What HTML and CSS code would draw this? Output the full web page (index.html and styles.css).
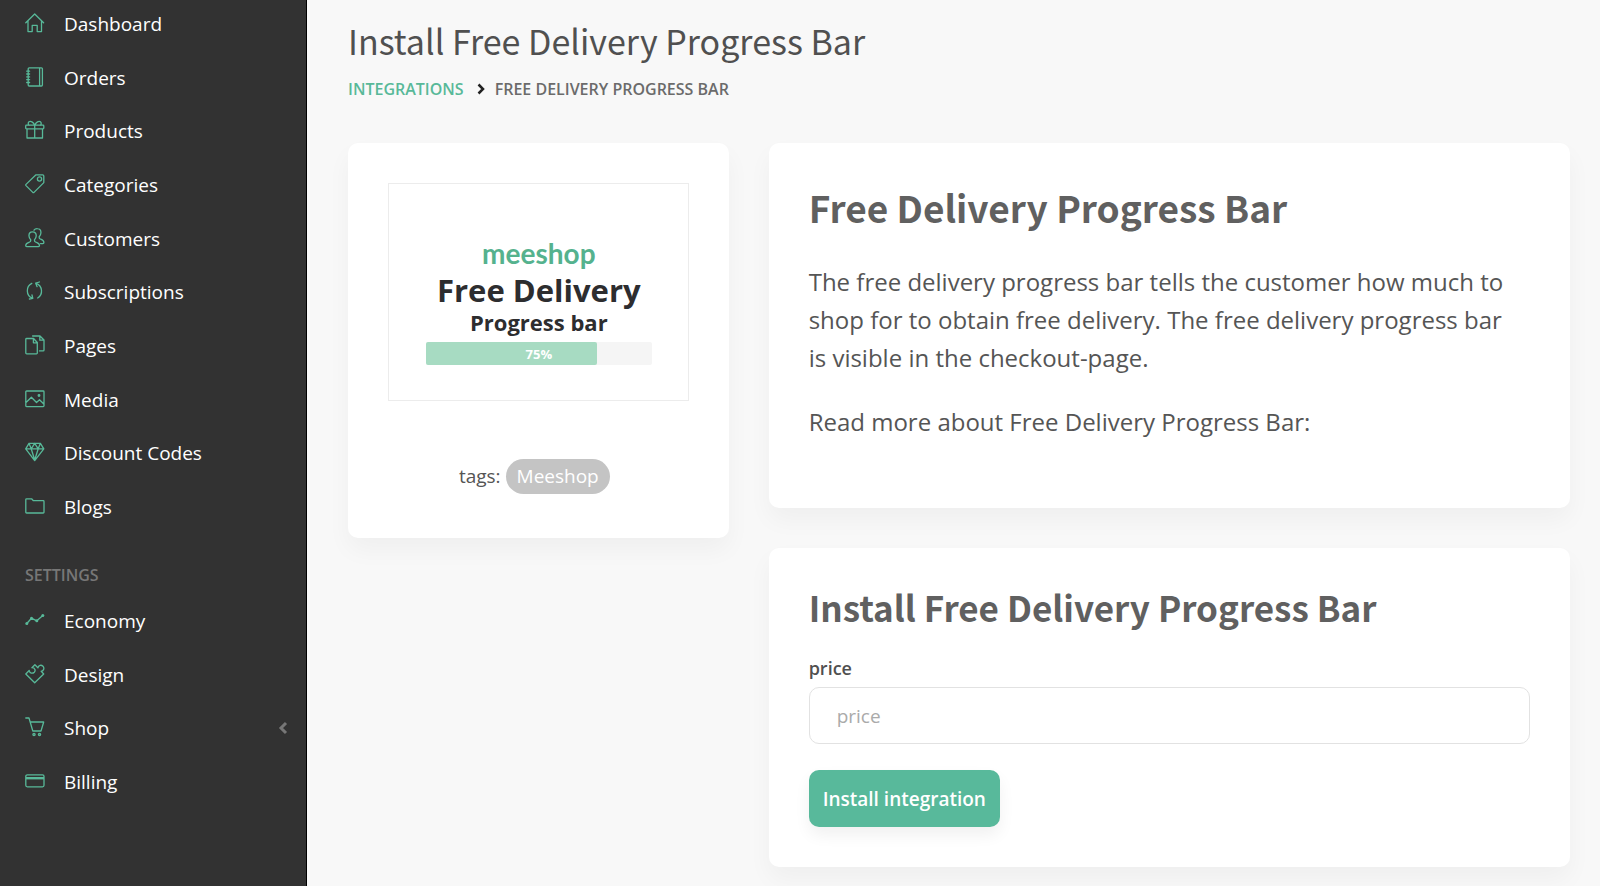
FILE: index.html
```html
<!DOCTYPE html>
<html lang="en">
<head>
<meta charset="utf-8">
<meta name="viewport" content="width=device-width, initial-scale=1">
<title>Install Free Delivery Progress Bar</title>
<link rel="stylesheet" href="styles.css">
</head>
<body>
<div class="layout">
  <nav class="sidebar" aria-label="Main menu">
    <ul class="menu menu-main">
      <li><a class="menu-link" href="#"><svg class="icon" viewBox="0 0 20 20"><path d="M.8 9.8 9.7 1l8.9 8.8M3 8.2V18.6H7.2V12.4h5V18.6h4.3V8.2"/></svg>Dashboard</a></li>
      <li><a class="menu-link" href="#"><svg class="icon" viewBox="0 0 20 20"><path d="M4.2.8H16.4q1 0 1 1V18q0 1-1 1H4.2q-1 0-1-1V1.800q0-1 1-1ZM14.6.8V19M1.700 4.200H4.600M1.700 7H4.600M1.700 9.900H4.600M1.700 12.700H4.600M1.700 15.500H4.600"/></svg>Orders</a></li>
      <li><a class="menu-link" href="#"><svg class="icon" viewBox="0 0 20 20"><path d="M1.500 5.200H18q.8 0 .8.800V8q0 .8-.8.800H1.500Q.7 8.800.7 8V6q0-.8.8-.8ZM2 8.800V18H17.500V8.800M9.700 5.200V18M9.700 5.200C8.500 2 5.500.6 4 1.800 2.800 2.800 3.200 4.500 4 5.200M9.700 5.200C11 2 14 .6 15.400 1.800c1.200 1 .9 2.700 0 3.400"/></svg>Products</a></li>
      <li><a class="menu-link" href="#"><svg class="icon" viewBox="0 0 20 20"><path d="M11 .8H17.600q1.200 0 1.200 1.200V8.600L9 18.400q-.6.500-1.200 0L1 11.600q-.5-.6 0-1.200Z"/><circle cx="14.500" cy="5" r="2.100"/></svg>Categories</a></li>
      <li><a class="menu-link" href="#"><svg class="icon" viewBox="0 0 20 20"><path d="M7.400 3.800c-2.500 0-3.600 1.800-3.400 4.200.1 1.700.9 2.900 1.700 3.700.2 1.400 0 1.900-1 2.300-2 .8-4 1.100-4 3.600 0 .7.400 1 1 1H13.500c.7 0 1-.3 1-1 0-2.500-2.200-2.800-4-3.600-1-.4-1.200-.9-1-2.300.9-.8 1.600-2 1.700-3.700.2-2.400-1.100-4.200-3.800-4.200ZM9 2.200C9.800 1 11 .6 12.500.7c2.500.1 3.600 1.900 3.400 4.300-.1 1.700-.9 2.900-1.700 3.700-.2 1.400 0 1.900 1 2.300 2 .8 3.700 1.200 3.700 3.600 0 .7-.3 1-1 1H15.500"/></svg>Customers</a></li>
      <li><a class="menu-link" href="#"><svg class="icon" viewBox="0 0 20 20"><path d="M6.800 2.400A8.200 8.200 0 0 0 7.200 17.200M4.400 18l3.400-.6L7 14M12.700 17A8.200 8.200 0 0 0 11.200 2.400M14.400 1l-3.700 1.200 1.400 3.500"/></svg>Subscriptions</a></li>
      <li><a class="menu-link" href="#"><svg class="icon" viewBox="0 0 20 20"><path d="M1.700 3.500H8.600L12.300 7.500V18q0 .8-.8.800H1.700Q.8 18.800.8 18V4.300q0-.8.900-.8ZM8.400 3.500V7.800H12.300M7.600 1H15L19 5V15q0 .9-.8.900H14.500M14.800 1V5.200H19"/></svg>Pages</a></li>
      <li><a class="menu-link" href="#"><svg class="icon" viewBox="0 0 20 20"><path d="M1.600 2H18.200q.8 0 .8.800V16.800q0 .8-.8.800H1.600q-.8 0-.8-.8V2.800Q.8 2 1.600 2ZM1 13.500 6.400 8.200 11.500 13.500 14.500 10.800 18.800 15"/><circle cx="14" cy="6.500" r=".8"/></svg>Media</a></li>
      <li><a class="menu-link" href="#"><svg class="icon" viewBox="0 0 20 20"><path d="M4 1.300H15.400L18.800 6.800 9.700 18.600.7 6.800ZM.7 6.800H18.800M4 1.300 6.200 6.800 9.700 1.300 13.200 6.800 15.400 1.300M6.200 6.800 9.700 18 13.200 6.800"/></svg>Discount Codes</a></li>
      <li><a class="menu-link" href="#"><svg class="icon" viewBox="0 0 20 20"><path d="M1.600 2.800H6.600L8.400 4.700H18.200q.8 0 .8.800V16.200q0 .8-.8.800H1.600q-.8 0-.8-.8V3.600q0-.8.800-.8Z"/></svg>Blogs</a></li>
    </ul>
    <h2 class="menu-heading">SETTINGS</h2>
    <ul class="menu menu-settings">
      <li><a class="menu-link" href="#"><svg class="icon" viewBox="0 0 20 20"><path d="M1.800 13.500 6.500 8.200 11.800 10.800 17.800 5.400"/><g class="dots"><circle cx="1.800" cy="13.500" r="1.500"/><circle cx="6.500" cy="8.200" r="1.500"/><circle cx="11.800" cy="10.800" r="1.500"/><circle cx="17.800" cy="5.400" r="1.500"/></g></svg>Economy</a></li>
      <li><a class="menu-link" href="#"><svg class="icon" viewBox="0 0 20 20"><path d="M.8 10 9.700 18.700 18.700 10 16.200 7.300C19 6.800 19.500 3.900 18 2.300 16.300.6 13.500 1 12.900 3.800L9.900.8 6.900 3.700C10.400 3.800 10.700 6.700 9.300 8.200 7.700 9.800 4.600 9.500 4.200 6.500Z"/></svg>Design</a></li>
      <li><a class="menu-link" href="#"><svg class="icon" viewBox="0 0 20 20"><path d="M.8 1H4L7.800 14H16L18.700 5H5.300"/><circle cx="9" cy="17.600" r="1.100"/><circle cx="14.500" cy="17.600" r="1.100"/></svg>Shop<svg class="menu-caret" viewBox="0 0 10 14"><path d="M8 2 3 7l5 5"/></svg></a></li>
      <li><a class="menu-link" href="#"><svg class="icon" viewBox="0 0 20 20"><rect x=".8" y="3.800" width="18.200" height="12" rx="1.500"/><path class="stripe" d="M1 7.200H19"/></svg>Billing</a></li>
    </ul>
  </nav>

  <main class="content">
    <h1 class="page-title">Install Free Delivery Progress Bar</h1>
    <nav class="breadcrumb" aria-label="Breadcrumb">
      <a href="#">INTEGRATIONS</a>
      <svg class="separator" viewBox="0 0 8 12"><path d="m1.500 1.500 4.500 4.500-4.500 4.500"/></svg>
      <span>FREE DELIVERY PROGRESS BAR</span>
    </nav>

    <div class="columns">
      <section class="card summary">
        <div class="preview">
          <div class="brand">meeshop</div>
          <div class="preview-title">Free Delivery</div>
          <div class="preview-subtitle">Progress bar</div>
          <div class="bar"><div class="bar-fill"></div><span class="bar-value">75%</span></div>
        </div>
        <p class="tags">tags: <span class="tag">Meeshop</span></p>
      </section>

      <div class="details">
        <section class="card about">
          <h2 class="card-title card-title-large">Free Delivery Progress Bar</h2>
          <p>The free delivery progress bar tells the customer how much to shop for to obtain free delivery. The free delivery progress bar is visible in the checkout-page.</p>
          <p>Read more about Free Delivery Progress Bar:</p>
        </section>
        <section class="card install">
          <h2 class="card-title">Install Free Delivery Progress Bar</h2>
          <form>
            <label class="field-label" for="price">price</label>
            <input class="field" id="price" type="text" placeholder="price">
            <button class="submit" type="button">Install integration</button>
          </form>
        </section>
      </div>
    </div>
  </main>
</div>
</body>
</html>
```
FILE: styles.css
```css
* {
  box-sizing: border-box;
}

body {
  margin: 0;
  background: #f8f8f8;
  color: #555;
  font-family: "Open Sans", "Noto Sans", sans-serif;
  font-size: 19px;
}

.layout {
  display: flex;
  min-height: 100vh;
}

/* Sidebar */

.sidebar {
  flex: 0 0 307px;
  background: #323232;
  border-right: 1px solid #000;
}

.menu {
  display: grid;
  grid-auto-rows: 1fr;
  margin: 0;
  padding: 0;
  list-style: none;
}

.menu-main {
  height: 537px;
  margin-top: -3px;
}

.menu-settings {
  height: 215px;
}

.menu-link {
  display: flex;
  align-items: center;
  height: 100%;
  padding: 0 18px 0 25px;
  color: #fff;
  text-decoration: none;
}

.icon {
  width: 20px;
  height: 20px;
  margin: 0 19px 2px 0;
  fill: none;
  stroke: #58b999;
  stroke-width: 1.3;
  stroke-linejoin: round;
  stroke-linecap: round;
}

.dots {
  fill: #58b999;
  stroke: none;
}

.stripe {
  stroke-width: 2.4;
  stroke-linecap: butt;
}

.menu-caret {
  width: 10px;
  height: 14px;
  margin-left: auto;
  fill: none;
  stroke: #777;
  stroke-width: 3;
}

.menu-heading {
  margin: 30px 0 8px;
  padding-left: 25px;
  color: #777;
  font-size: 16px;
  font-weight: 600;
  line-height: 22px;
}

/* Page header */

.content {
  flex: 1;
  min-width: 0;
  padding: 15px 30px 20px 41px;
}

.page-title,
.card-title {
  margin: 0;
  font-family: "Noto Sans CJK SC", sans-serif;
}

.page-title {
  color: #505050;
  font-size: 34px;
  font-weight: 400;
  line-height: 52px;
}

.breadcrumb {
  display: flex;
  align-items: center;
  height: 36px;
  margin-top: 4px;
  color: #6b6b6b;
  font-size: 16px;
  font-weight: 600;
}

.breadcrumb a {
  color: #58b999;
  text-decoration: none;
}

.separator {
  width: 8px;
  height: 12px;
  margin: 0 10px 0 13px;
  fill: none;
  stroke: #222;
  stroke-width: 2.5;
}

/* Cards */

.columns {
  display: grid;
  grid-template-columns: repeat(12, 1fr);
  gap: 40px;
  align-items: start;
  margin-top: 36px;
}

.card {
  padding: 40px;
  background: #fff;
  border-radius: 10px;
  box-shadow: 0 12px 24px rgba(0, 0, 0, 0.04);
}

.summary {
  grid-column: span 4;
  padding-bottom: 44px;
}

.details {
  display: grid;
  grid-column: span 8;
  gap: 40px;
}

.preview {
  height: 218px;
  padding: 53px 36px 0 37px;
  border: 1px solid #ececec;
  color: #2d2d2f;
  font-weight: 700;
  text-align: center;
}

.brand {
  color: #55b28e;
  font-family: Lato, sans-serif;
  font-size: 28px;
  line-height: 32px;
}

.preview-title {
  font-size: 31px;
  line-height: 42px;
}

.preview-subtitle {
  font-size: 22px;
  line-height: 22px;
}

.bar {
  position: relative;
  height: 23px;
  margin-top: 9px;
  background: #f5f5f5;
  border-radius: 2px;
  color: #fff;
  font-size: 13px;
  line-height: 24px;
}

.bar-fill {
  width: 76%;
  height: 100%;
  background: #a7dbc2;
  border-radius: 2px;
}

.bar-value {
  position: absolute;
  inset: 0;
}

.tags {
  margin: 58px 0 0;
  padding-right: 8px;
  text-align: center;
}

.tag {
  display: inline-block;
  padding: 0 11px;
  background: #c4c4c4;
  border-radius: 18px;
  color: #fff;
  line-height: 35px;
}

.card-title {
  color: #606060;
  font-size: 35px;
  font-weight: 700;
  line-height: 38px;
}

.card-title-large {
  font-size: 37px;
  line-height: 48px;
}

.about {
  padding-right: 48px;
  padding-bottom: 67px;
  font-size: 24px;
  line-height: 38px;
}

.about p {
  margin: 26px 0 0;
}

.about .card-title + p {
  margin-top: 32px;
}

/* Install form */

.field-label {
  display: block;
  margin-top: 29px;
  color: #505050;
  font-size: 18px;
  font-weight: 600;
  line-height: 26px;
}

.field {
  display: block;
  width: 100%;
  height: 57px;
  margin-top: 6px;
  padding: 0 27px;
  background: #fff;
  border: 1px solid #e2e2e2;
  border-radius: 10px;
  color: #555;
  font: inherit;
}

.field::placeholder {
  color: #aaa;
}

.submit {
  display: block;
  height: 57px;
  margin-top: 26px;
  padding: 0 14px;
  background: #58b99b;
  border: 0;
  border-radius: 10px;
  box-shadow: 0 8px 16px rgba(0, 0, 0, 0.06);
  color: #fff;
  font: inherit;
  font-weight: 600;
}
```
